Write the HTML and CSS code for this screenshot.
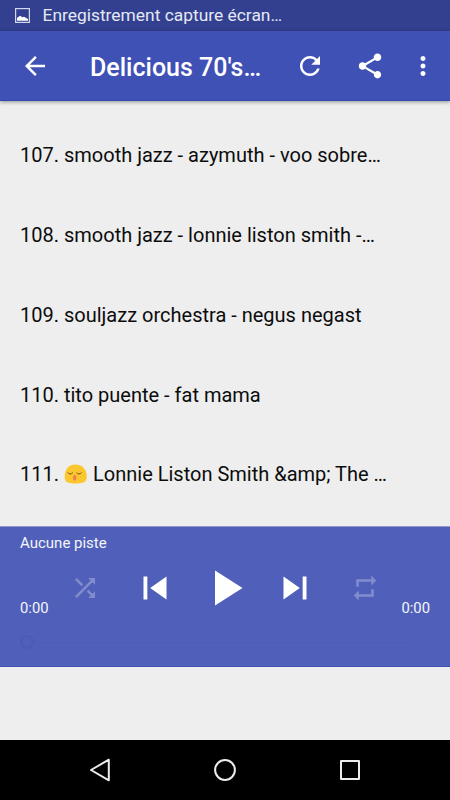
FILE: index.html
```html
<!DOCTYPE html>
<html lang="fr">
<head>
  <meta charset="UTF-8" />
  <meta name="viewport" content="width=device-width, initial-scale=1.0"/>
  <title>Delicious 70's</title>
  <link rel="stylesheet" href="styles.css">
</head>
<body>
  <div class="phone">
    <!-- Status bar -->
    <div class="status-bar">
      <svg class="status-icon" viewBox="0 0 15 15">
        <rect x="0.6" y="0.6" width="13.8" height="13.8" fill="none" stroke="#d3d7ec" stroke-width="1.2"/>
        <path fill="#fff" d="M2 12.800V10l3-2.300 2.500 1.600L9 8.800l4 2.200v1.800z"/>
      </svg>
      <span>Enregistrement capture écran…</span>
    </div>

    <!-- Toolbar -->
    <header class="toolbar">
      <svg class="icon" viewBox="0 0 24 24"><path d="M20 11H7.830l5.590-5.590L12 4l-8 8 8 8 1.410-1.410L7.830 13H20v-2z"/></svg>
      <h1 class="title">Delicious 70's…</h1>
      <svg class="icon refresh" viewBox="0 0 24 24"><path d="M17.650 6.350C16.200 4.900 14.210 4 12 4c-4.420 0-7.990 3.580-7.990 8s3.570 8 7.990 8c3.730 0 6.840-2.550 7.730-6h-2.080c-.82 2.330-3.040 4-5.650 4-3.310 0-6-2.690-6-6s2.690-6 6-6c1.660 0 3.140.69 4.220 1.780L13 11h7V4l-2.350 2.350z"/></svg>
      <svg class="icon share" viewBox="0 0 24 24"><path d="M18 16.080c-.76 0-1.440.3-1.960.77L8.910 12.700c.05-.23.09-.46.09-.7s-.04-.47-.09-.7l7.050-4.110c.54.5 1.250.81 2.040.81 1.660 0 3-1.340 3-3s-1.340-3-3-3-3 1.340-3 3c0 .24.04.47.09.7L8.040 9.810C7.500 9.310 6.790 9 6 9c-1.660 0-3 1.340-3 3s1.340 3 3 3c.79 0 1.500-.31 2.040-.81l7.120 4.160c-.05.21-.08.43-.08.65 0 1.610 1.310 2.920 2.920 2.920 1.610 0 2.920-1.310 2.920-2.920s-1.310-2.920-2.920-2.920z"/></svg>
      <svg class="icon more" viewBox="0 0 24 24"><path d="M12 8c1.100 0 2-.9 2-2s-.9-2-2-2-2 .9-2 2 .9 2 2 2zm0 2c-1.100 0-2 .9-2 2s.9 2 2 2 2-.9 2-2-.9-2-2-2zm0 6c-1.100 0-2 .9-2 2s.9 2 2 2 2-.9 2-2-.9-2-2-2z"/></svg>
    </header>

    <!-- Track list -->
    <ul class="tracks">
      <li>107. smooth jazz - azymuth - voo sobre…</li>
      <li>108. smooth jazz - lonnie liston smith -…</li>
      <li>109. souljazz orchestra - negus negast</li>
      <li>110. tito puente - fat mama</li>
      <li class="with-emoji">
        <span>111.</span>
        <svg class="emoji" viewBox="0 0 24 20">
          <path fill="#fcc62e" d="M.7 12.500C.7 5 5 .5 11.500 .5S22.700 5 22.700 12.500c0 5-2 7-11.200 7S.7 17.500.7 12.500z"/>
          <path fill="none" stroke="#6b4a2a" stroke-width="1" stroke-linecap="round" d="M4 8.800c.8 1.600 3.600 1.600 4.600.2M12.800 9c1 1.400 3.800 1.400 4.600-.2"/>
          <ellipse cx="10.700" cy="13.800" rx="1.700" ry="2.900" fill="#ef7d54"/>
        </svg>
        <span>Lonnie Liston Smith &amp;amp; The …</span>
      </li>
    </ul>

    <!-- Player -->
    <section class="player">
      <div class="track-name">Aucune piste</div>
      <div class="controls">
        <span class="time">0:00</span>
        <div class="buttons">
          <svg class="icon off" viewBox="0 0 24 24"><path d="M10.590 9.170L5.410 4 4 5.410l5.170 5.170 1.420-1.410zM14.500 4l2.040 2.040L4 18.590 5.410 20 17.960 7.460 20 9.500V4h-5.500zm.33 9.410l-1.410 1.410 3.130 3.130L14.500 20H20v-5.500l-2.040 2.040-3.130-3.130z"/></svg>
          <svg class="skip" viewBox="0 0 24 24"><path d="M6 6h2v12H6zm3.500 6l8.500 6V6z"/></svg>
          <svg class="play" viewBox="0 0 24 24"><path d="M8 5v14l11-7z"/></svg>
          <svg class="skip" viewBox="0 0 24 24"><path d="M6 18l8.500-6L6 6v12zM16 6v12h2V6h-2z"/></svg>
          <svg class="icon off" viewBox="0 0 24 24"><path d="M7 7h10v3l4-4-4-4v3H5v6h2V7zm10 10H7v-3l-4 4 4 4v-3h12v-6h-2v4z"/></svg>
        </div>
        <span class="time">0:00</span>
      </div>
      <div class="seekbar">
        <span class="thumb"></span>
        <span class="line"></span>
      </div>
    </section>

    <!-- Android navigation -->
    <nav class="nav-bar">
      <svg viewBox="0 0 30 30"><path d="M6 15L23.800 4.700v20.600z"/></svg>
      <svg viewBox="0 0 30 30"><circle cx="15" cy="15" r="9.900"/></svg>
      <svg viewBox="0 0 30 30"><rect x="6" y="6" width="18" height="18"/></svg>
    </nav>
  </div>
</body>
</html>
```

FILE: styles.css
```css
* {
  box-sizing: border-box;
}

body {
  margin: 0;
  font-family: Roboto, sans-serif;
  background: #eee;
}

.phone {
  width: 450px;
  height: 800px;
  display: flex;
  flex-direction: column;
  overflow: hidden;
}

svg {
  display: block;
  flex-shrink: 0;
}

.status-bar {
  height: 31px;
  padding: 0 15px 1px;
  display: flex;
  align-items: center;
  gap: 12.5px;
  background: #32408f;
  color: #e6e8f4;
  font-size: 17.4px;
  line-height: 28px;
  white-space: nowrap;
}

.status-icon {
  width: 15px;
  height: 15px;
}

.toolbar {
  height: 70px;
  padding: 1px 12px 0 20px;
  display: flex;
  align-items: center;
  background: #3f51b5;
  border-bottom: 1px solid #3346b4;
  box-shadow: 0 1px 4px rgba(0, 0, 0, 0.4);
}

.icon {
  width: 30px;
  height: 30px;
  fill: #fff;
}

.title {
  flex: 1;
  margin: 0 0 0 40px;
  padding-top: 4px;
  color: #fff;
  font-size: 25px;
  font-weight: 500;
  line-height: 30px;
  white-space: nowrap;
}

.share {
  margin-left: 30px;
}

.more {
  margin-left: 23px;
}

/* Track list */
.tracks {
  height: 425px;
  margin: 0;
  padding: 13px 20px 0;
  list-style: none;
  overflow: hidden;
}

.tracks li {
  height: 80px;
  color: #0c0c0c;
  font-size: 20px;
  line-height: 82px;
  white-space: nowrap;
}

.tracks .with-emoji {
  display: flex;
  align-items: center;
  gap: 5px;
  line-height: 80px;
}

.emoji {
  width: 24px;
  height: 20px;
  margin-bottom: 1px;
}

/* Player */
.player {
  height: 141px;
  padding: 6px 20px 0;
  background: #5060ba;
  border-top: 1px solid #8f99cb;
  border-bottom: 1px solid #3f51b5;
  color: #f4f5fb;
}

.track-name {
  font-size: 15px;
  line-height: 20px;
}

.controls {
  height: 69px;
  display: flex;
  justify-content: space-between;
  align-items: flex-end;
}

.buttons {
  height: 69px;
  display: grid;
  grid-template-columns: repeat(5, 70px);
  justify-items: center;
  align-items: center;
}

.time {
  width: 29px;
  font-size: 14.8px;
  line-height: 18px;
  margin-bottom: 5px;
}

.time:last-child {
  text-align: right;
}

.off {
  opacity: 0.28;
}

.skip {
  width: 46px;
  height: 46px;
  fill: #fff;
}

.play {
  width: 60px;
  height: 60px;
  fill: #fff;
}

.seekbar {
  height: 14px;
  margin-top: 13px;
  display: flex;
  align-items: center;
}

.thumb {
  width: 14px;
  height: 14px;
  border: 2px solid #4b5bb5;
  border-radius: 50%;
}

.line {
  width: 380px;
  height: 1px;
  background: #4d5db7;
}

/* Android navigation */
.nav-bar {
  height: 60px;
  margin-top: auto;
  padding: 0 85px;
  display: flex;
  justify-content: space-between;
  align-items: center;
  background: #000;
}

.nav-bar svg {
  width: 30px;
  height: 30px;
  fill: none;
  stroke: #ececec;
  stroke-width: 2;
  stroke-linejoin: round;
}
```
